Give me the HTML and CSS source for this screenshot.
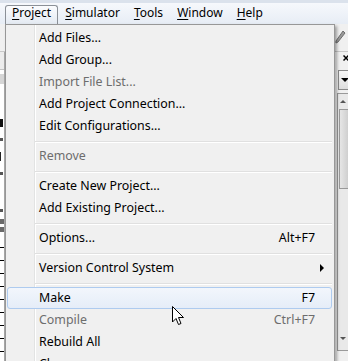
FILE: index.html
```html
<!DOCTYPE html>
<html lang="en">
<head>
    <meta charset="UTF-8">
    <title>Project menu</title>
    <link rel="stylesheet" href="styles.css">
</head>
<body>
    <!-- Main menu bar -->
    <div class="menubar">
        <span class="mb-item active"><u>P</u>roject</span>
        <span class="mb-item"><u>S</u>imulator</span>
        <span class="mb-item"><u>T</u>ools</span>
        <span class="mb-item"><u>W</u>indow</span>
        <span class="mb-item"><u>H</u>elp</span>
    </div>

    <!-- Application behind the menu -->
    <div class="app">
        <div class="toolbar">
            <span class="tb-left"></span>
            <svg class="pencil" width="11" height="15" viewBox="0 0 11 15">
                <path d="M8 1 L10 3 L3 12 L1 13 L1 11 Z" fill="#9a9a9a" stroke="#6e6e6e" stroke-width="1"/>
            </svg>
        </div>
        <div class="panes">
            <div class="left-pane">
                <div class="lp-head"></div>
                <div class="lp-tab"></div>
                <div class="lp-row"><span class="frag big"></span></div>
                <div class="lp-row"><span class="frag"></span></div>
                <div class="lp-row"><span class="frag thin"></span></div>
                <div class="lp-row"><span class="frag"></span></div>
                <div class="lp-gap"></div>
                <div class="lp-row"><span class="frag"></span></div>
                <div class="lp-bar"></div>
                <div class="lp-bar"></div>
                <div class="lp-lines"></div>
            </div>
            <div class="middle"></div>
            <div class="right-pane">
                <div class="rp-close">
                    <svg width="6" height="6" viewBox="0 0 6 6">
                        <path d="M0.5 0.5 L5.5 5.5 M5.5 0.5 L0.5 5.5" stroke="#000" stroke-width="1.5"/>
                    </svg>
                </div>
                <div class="rp-combo"><span class="down"></span></div>
                <div class="rp-scroll">
                    <span class="up"></span>
                    <div class="thumb"></div>
                    <span class="dn"></span>
                </div>
            </div>
        </div>
    </div>

    <!-- Open Project menu -->
    <div class="menu">
        <div class="mi">Add Files...</div>
        <div class="mi">Add Group...</div>
        <div class="mi dis">Import File List...</div>
        <div class="mi">Add Project Connection...</div>
        <div class="mi">Edit Configurations...</div>
        <div class="sep"></div>
        <div class="mi dis">Remove</div>
        <div class="sep"></div>
        <div class="mi">Create New Project...</div>
        <div class="mi">Add Existing Project...</div>
        <div class="sep"></div>
        <div class="mi"><span class="label">Options...</span><span class="key">Alt+F7</span><span class="sub"></span></div>
        <div class="sep"></div>
        <div class="mi"><span class="label">Version Control System</span><span class="sub"><span class="arrow"></span></span></div>
        <div class="sep"></div>
        <div class="mi hot"><span class="label">Make</span><span class="key">F7</span><span class="sub"></span></div>
        <div class="mi dis"><span class="label">Compile</span><span class="key">Ctrl+F7</span><span class="sub"></span></div>
        <div class="mi">Rebuild All</div>
        <div class="mi">Clean</div>
    </div>

    <svg class="cursor" width="13" height="20" viewBox="0 0 13 20">
        <path d="M0.5 0.5 L0.5 16 L4 12.5 L6.5 18.5 L9 17.5 L6.5 11.5 L11.5 11.5 Z" fill="#fff" stroke="#000" stroke-width="1" stroke-linejoin="round"/>
    </svg>
</body>
</html>
```

FILE: styles.css
```css
body {
    margin: 0;
    width: 348px;
    height: 361px;
    overflow: hidden;
    position: relative;
    font-family: "Noto Sans", sans-serif;
    font-size: 12px;
    color: #000;
    background: #fff;
}

/* menu bar */
.menubar {
    height: 24px;
    box-sizing: border-box;
    padding: 5px 0 0 5px;
    display: flex;
    background: linear-gradient(#dbe2ec 0, #dbe2ec 3px, #f6f8fc 3px, #e7edf5 24px);
}
.mb-item {
    height: 19px;
    box-sizing: border-box;
    padding: 0 6px;
    border: 1px solid transparent;
    border-bottom: none;
    border-radius: 3px 3px 0 0;
    line-height: 13px;
}
.mb-item u {
    text-underline-offset: 2px;
}
.mb-item.active {
    border-color: #8b9097;
    background: linear-gradient(#fbfcfe, #e4eaf2);
}

/* app behind */
.app {
    height: 337px;
    display: flex;
    flex-direction: column;
}
.toolbar {
    height: 28px;
    box-sizing: border-box;
    background: #f0f0f0;
    border-bottom: 1px solid #c8c8c8;
    display: flex;
    justify-content: space-between;
    align-items: flex-start;
    padding: 6px 2px 0 0;
}
.panes {
    flex: 1;
    display: flex;
}
.left-pane {
    width: 4px;
    overflow: hidden;
    border-right: 1px solid #a9a9a9;
    display: flex;
    flex-direction: column;
}
.lp-head {
    height: 17px;
    background: #ececec;
    border-bottom: 1px solid #c4c4c4;
}
.lp-tab {
    height: 10px;
    margin: 4px 0 30px;
    background: #d6d6d6;
}
.lp-row {
    height: 17px;
    display: flex;
    align-items: center;
}
.frag {
    width: 3px;
    height: 3px;
    background: #555;
}
.frag.big {
    height: 8px;
    background: #111;
}
.frag.thin {
    width: 1px;
    height: 9px;
    background: #222;
}
.lp-gap {
    height: 20px;
}
.lp-bar {
    height: 5px;
    margin-bottom: 3px;
    background: #6a6a6a;
}
.lp-lines {
    flex: 1;
    background: repeating-linear-gradient(#fff 0, #fff 12px, #000 12px, #000 13px);
}
.middle {
    flex: 1;
}
.right-pane {
    width: 12px;
    display: flex;
    flex-direction: column;
    background: #f0f0f0;
}
.rp-close {
    height: 16px;
    padding: 3px 0 0 7px;
    box-sizing: border-box;
}
.rp-close svg {
    display: block;
}
.rp-combo {
    height: 20px;
    margin: 2px 0 3px 2px;
    box-sizing: border-box;
    border: 1px solid #8a8a8a;
    border-right: none;
    background: linear-gradient(#f7f7f7, #dedede);
    display: flex;
    align-items: center;
    padding-left: 2px;
}
.down {
    border-left: 4px solid transparent;
    border-right: 4px solid transparent;
    border-top: 4px solid #000;
}
.rp-scroll {
    flex: 1;
    margin: 0 0 10px 1px;
    border: 1px solid #9a9a9a;
    border-right: none;
    background: #e9e9e9;
    display: flex;
    flex-direction: column;
    padding: 6px 0 0 2px;
}
.up {
    width: 0;
    border-left: 3px solid transparent;
    border-right: 3px solid transparent;
    border-bottom: 3px solid #555;
}
.thumb {
    height: 78px;
    margin: 6px 0 0 -1px;
    border: 1px solid #999;
    border-right: none;
    background: linear-gradient(to right, #e6e6e6, #cfcfcf);
}
.dn {
    width: 0;
    margin-top: auto;
    margin-bottom: 10px;
    border-left: 3px solid transparent;
    border-right: 3px solid transparent;
    border-top: 3px solid #555;
}

/* drop-down menu */
.menu {
    position: absolute;
    left: 5px;
    top: 24px;
    width: 330px;
    height: 350px;
    box-sizing: border-box;
    border: 1px solid #979797;
    padding: 2px 2px 2px 1px;
    background-color: #f0f0f0;
    background-image: linear-gradient(to right, transparent 28px, #e2e3e3 28px, #e2e3e3 29px, #fff 29px, #fff 30px, transparent 30px);
    box-shadow: 2px 2px 3px rgba(0, 0, 0, 0.35);
    font-size: 12.4px;
}
.mi {
    height: 22px;
    box-sizing: border-box;
    border: 1px solid transparent;
    border-radius: 3px;
    padding: 0 0 1px 31px;
    display: flex;
    align-items: center;
    white-space: nowrap;
}
.mi .label {
    flex: 1;
}
.mi .sub {
    width: 16px;
    height: 100%;
    box-sizing: border-box;
    padding-left: 5px;
    display: flex;
    align-items: center;
}
.arrow {
    border-top: 4px solid transparent;
    border-bottom: 4px solid transparent;
    border-left: 4px solid #000;
}
.mi.dis {
    color: #6d6d6d;
}
.mi.hot {
    border-color: #aecbef;
    background: linear-gradient(#f2f6fc, #e5edf8);
}
.sep {
    height: 8px;
    margin-left: 28px;
    background: linear-gradient(transparent 4px, #e0e0e0 4px, #e0e0e0 5px, #fff 5px, #fff 6px, transparent 6px);
}

.cursor {
    position: absolute;
    left: 172px;
    top: 306px;
}
```
